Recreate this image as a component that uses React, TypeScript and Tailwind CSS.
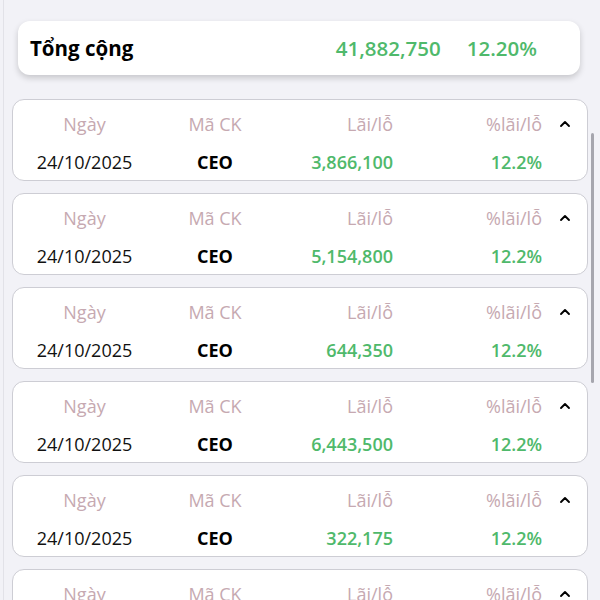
import React from "react";
import { ChevronUp } from "lucide-react";

const rows = [
  { d: "24/10/2025", c: "CEO", v: "3,866,100", p: "12.2%" },
  { d: "24/10/2025", c: "CEO", v: "5,154,800", p: "12.2%" },
  { d: "24/10/2025", c: "CEO", v: "644,350", p: "12.2%" },
  { d: "24/10/2025", c: "CEO", v: "6,443,500", p: "12.2%" },
  { d: "24/10/2025", c: "CEO", v: "322,175", p: "12.2%" },
  { d: "24/10/2025", c: "CEO", v: "1,288,700", p: "12.2%" },
];

function Card({ r }: { r: (typeof rows)[number] }) {
  return (
    <div className="h-[82px] shrink-0 rounded-[12px] border border-[#cdcdd4] bg-white pt-[12px]">
      <div className="grid grid-cols-[143px_118px_119px_149px_1fr] items-center text-[18px] leading-[24px] text-[#c6a9b1]">
        <div className="text-center">Ngày</div>
        <div className="text-center">Mã CK</div>
        <div className="text-right">Lãi/lỗ</div>
        <div className="text-right">%lãi/lỗ</div>
        <div className="flex justify-center">
          <ChevronUp size={16} strokeWidth={2.8} className="text-black" />
        </div>
      </div>
      <div className="mt-[14px] grid grid-cols-[143px_118px_119px_149px_1fr] items-center text-[18px] leading-[24px]">
        <div className="text-center text-[#111]">{r.d}</div>
        <div className="text-center font-bold text-black">{r.c}</div>
        <div className="text-right font-semibold text-[#4fb96b]">{r.v}</div>
        <div className="text-right font-semibold text-[#4fb96b]">{r.p}</div>
        <div />
      </div>
    </div>
  );
}

export default function App() {
  return (
    <div
      className="relative h-[600px] w-[600px] overflow-hidden bg-[#f2f2f7]"
      style={{ fontFamily: '"Open Sans", "Noto Sans", sans-serif' }}
    >
      <div className="absolute left-[3px] top-0 h-full w-px bg-[#e2e2e8]" />
      <div className="flex flex-col pt-[21px]">
        <div className="ml-[18px] mr-[20px] flex h-[54px] items-center rounded-[12px] bg-white pl-[12px] pr-[43px] shadow-[0_3px_6px_rgba(0,0,0,0.18)]">
          <span className="text-[20.5px] font-bold text-black">Tổng cộng</span>
          <span className="ml-auto text-[20.5px] font-semibold text-[#4fb96b]">41,882,750</span>
          <span className="ml-[26px] text-[20.5px] font-semibold text-[#4fb96b]">12.20%</span>
        </div>
        <div className="mx-[12px] mt-[24px] flex flex-col gap-[12px]">
          {rows.map((r, i) => (
            <Card key={i} r={r} />
          ))}
        </div>
      </div>
      <div className="absolute left-[591px] top-[133px] h-[250px] w-[3px] rounded-full bg-[#a6a6ae]" />
    </div>
  );
}
